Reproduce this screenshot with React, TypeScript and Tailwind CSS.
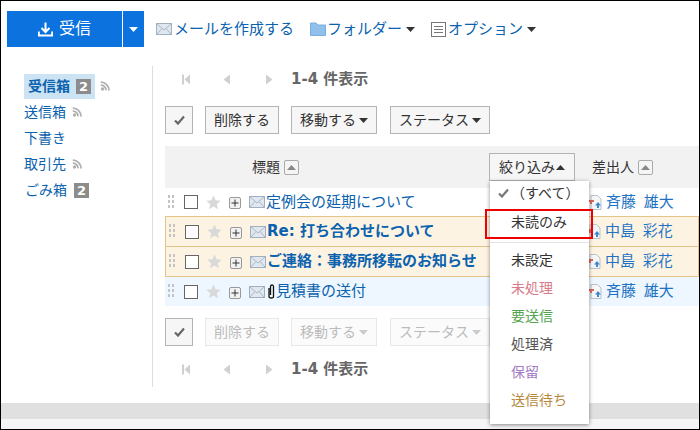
import { Fragment } from "react";

const FONT = "font-['DejaVu_Sans','Noto_Sans_CJK_JP',sans-serif]";

function Caret({ color = "#333", up = false, className = "" }: { color?: string; up?: boolean; className?: string }) {
  return (
    <svg width="9" height="5" viewBox="0 0 9 5" className={className}>
      <path d={up ? "M0 5L4.5 0L9 5Z" : "M0 0H9L4.5 5Z"} fill={color} />
    </svg>
  );
}

function Mail({ className = "" }: { className?: string }) {
  return (
    <svg width="16" height="12" viewBox="0 0 16 12" className={"shrink-0 " + className}>
      <rect x="0.5" y="0.5" width="15" height="11" fill="#e1e7ee" stroke="#9fb0c0" />
      <path d="M1 1L8 7L15 1M1 11L6 5.5M15 11L10 5.5" fill="none" stroke="#a9b8c6" />
    </svg>
  );
}

function Rss({ className = "" }: { className?: string }) {
  return (
    <svg width="10" height="10" viewBox="0 0 10 10" className={className}>
      <circle cx="2.5" cy="8" r="1.7" fill="#b0b0b0" />
      <path d="M0.8 4.2A5 5 0 0 1 6 9.4M0.8 1.2A8 8 0 0 1 9 9.4" fill="none" stroke="#b0b0b0" strokeWidth="1.8" />
    </svg>
  );
}

function Badge({ className = "" }: { className?: string }) {
  return (
    <span className={"flex h-[15px] w-[15px] items-center justify-center bg-[#8c8c8c] text-[13px] leading-none font-bold text-white " + className}>2</span>
  );
}

function SortBtn() {
  return (
    <span className="flex h-[15px] w-[15px] items-center justify-center rounded-[2px] border border-[#aaa] bg-[#f5f5f5]">
      <Caret color="#888" up />
    </span>
  );
}

function Btn({ label, caret, off }: { label: string; caret?: boolean; off?: boolean }) {
  return (
    <span
      className={
        "flex h-[28px] items-center justify-center border bg-[#f6f6f6] px-[8px] text-[14px] " +
        (off ? "border-[#e8e8e8] bg-[#fbfbfb] text-[#bbb]" : "border-[#b4b4b4] text-[#333]")
      }
    >
      {label}
      {caret && <Caret color={off ? "#ccc" : "#333"} className="ml-[3px]" />}
    </span>
  );
}

function CheckBtn() {
  return (
    <span className="flex h-[28px] w-[28px] items-center justify-center border border-[#b4b4b4] bg-[#f6f6f6]">
      <svg width="11" height="10" viewBox="0 0 11 10">
        <path d="M1 5.5L4 8.5L10 1.5" fill="none" stroke="#666" strokeWidth="2.2" />
      </svg>
    </span>
  );
}

function Pager({ className = "" }: { className?: string }) {
  return (
    <div className={"flex items-center pl-[17px] " + className}>
      <svg width="9" height="11" viewBox="0 0 9 11" fill="#d0d0d0">
        <rect x="0" y="0.5" width="2" height="10" />
        <path d="M8 0.5V10.5L2.5 5.5Z" />
      </svg>
      <svg width="7" height="11" viewBox="0 0 7 11" fill="#d0d0d0" className="ml-[32px]">
        <path d="M7 0.5V10.5L0.5 5.5Z" />
      </svg>
      <svg width="7" height="11" viewBox="0 0 7 11" fill="#d0d0d0" className="ml-[36px]">
        <path d="M0 0.5V10.5L6.5 5.5Z" />
      </svg>
      <span className="ml-[18px] text-[15px] font-bold text-[#666]">1-4 件表示</span>
    </div>
  );
}

function Toolbar({ off }: { off?: boolean }) {
  return (
    <div className="flex items-center">
      <CheckBtn />
      <span className="ml-[12px]"><Btn label="削除する" off={off} /></span>
      <span className="ml-[12px]"><Btn label="移動する" caret off={off} /></span>
      <span className="ml-[13px]"><Btn label="ステータス" caret off={off} /></span>
    </div>
  );
}

const rows = [
  { title: "定例会の延期について", name: "斉藤 雄大", bold: false, clip: false, cls: "h-[28px]" },
  { title: "Re: 打ち合わせについて", name: "中島 彩花", bold: true, clip: false, cls: "h-[31px] border border-[#e5c487] bg-[#fdf3e3]" },
  { title: "ご連絡：事務所移転のお知らせ", name: "中島 彩花", bold: true, clip: false, cls: "h-[30px] border border-t-0 border-[#e5c487] bg-[#fdf3e3]" },
  { title: "見積書の送付", name: "斉藤 雄大", bold: false, clip: true, cls: "h-[29px] bg-[#eef7ff]" },
];

function Row({ r }: { r: (typeof rows)[number] }) {
  return (
    <div className={"flex items-center pl-[3px] " + r.cls}>
      <svg width="6" height="15" viewBox="0 0 6 15" fill="#c4c4c4" className="shrink-0">
        {[0, 5, 10].map((y) => (
          <Fragment key={y}>
            <rect x="0" y={y} width="2" height="3" />
            <rect x="4" y={y} width="2" height="3" />
          </Fragment>
        ))}
      </svg>
      <span className="ml-[10px] h-[14px] w-[14px] shrink-0 border border-[#666] bg-white" />
      <svg width="15" height="15" viewBox="0 0 15 15" className="ml-[8px] shrink-0">
        <path d="M7.5 0.5L9.6 5.3L14.7 5.8L10.8 9.2L12 14.3L7.5 11.6L3 14.3L4.2 9.2L0.3 5.8L5.4 5.3Z" fill="#d9d9d9" />
      </svg>
      <span className="mt-[2px] ml-[8px] flex h-[12px] w-[12px] shrink-0 items-center justify-center rounded-[2px] border border-[#999] bg-[#f2f2f2] text-[#333]">
        <svg width="8" height="8" viewBox="0 0 8 8">
          <path d="M4 0.5V7.5M0.5 4H7.5" stroke="#333" />
        </svg>
      </span>
      <Mail className="ml-[8px]" />
      {r.clip && (
        <svg width="7" height="15" viewBox="0 0 7 15" className="ml-[3px] shrink-0">
          <path d="M1 4V12.5C1 14.5 5.5 14.5 5.5 12.5V2.5C5.5 0.5 2.5 0.5 2.5 2.5V11" fill="none" stroke="#111" strokeWidth="1.3" />
        </svg>
      )}
      <span className={"ml-[1px] flex-1 whitespace-nowrap text-[15px] text-[#0b62ae] " + (r.bold ? "font-bold" : "")}>{r.title}</span>
      <span className="flex w-[111px] shrink-0 items-center">
        <svg width="14" height="15" viewBox="0 0 14 15" className="shrink-0">
          <path d="M3 0.5H9.5L13 4V14.5H3Z" fill="#f4f6f8" stroke="#b9c2ca" />
          <path d="M0 6H6M3 5V9" stroke="#e0685a" strokeWidth="2" />
          <path d="M10 7L13 10.5H11V13H9V10.5H7Z" fill="#3d88cc" />
        </svg>
        <span className="ml-[4px] whitespace-nowrap text-[15px] [word-spacing:3px] text-[#1f73c4]">{r.name}</span>
      </span>
    </div>
  );
}

const menu = [
  { label: "未設定", cls: "text-[#333]" },
  { label: "未処理", cls: "text-[#d97a8a]" },
  { label: "要送信", cls: "text-[#55a34f]" },
  { label: "処理済", cls: "text-[#555]" },
  { label: "保留", cls: "text-[#a27cc4]" },
  { label: "送信待ち", cls: "text-[#b98a3e]" },
];

function Menu() {
  return (
    <div className="absolute top-[27px] left-0 z-10 w-[99px] bg-white text-[14px] shadow-[0_1px_4px_rgba(0,0,0,0.45)]">
      <div className="flex h-[27px] items-center pb-[3px] pl-[8px] text-[#333]">
        <svg width="11" height="10" viewBox="0 0 11 10">
          <path d="M1 5.5L4 8.5L10 1.5" fill="none" stroke="#777" strokeWidth="2.2" />
        </svg>
        <span className="ml-[2px]">（すべて）</span>
      </div>
      <div className="relative flex h-[28px] items-center pl-[21px] text-[#333]">
        未読のみ
        <span className="absolute top-[1px] -left-[5px] h-[30px] w-[108px] border-2 border-[#ee0000]" />
      </div>
      <div className="mt-[6px] mb-[3px] h-px bg-[#e4e4e4]" />
      {menu.map((m) => (
        <div key={m.label} className={"flex h-[28px] items-center pl-[21px] " + m.cls}>{m.label}</div>
      ))}
      <div className="h-[10px]" />
    </div>
  );
}

export default function App() {
  return (
    <div className={"flex h-[430px] w-[700px] flex-col overflow-hidden border border-black bg-white " + FONT}>
      <div className="flex h-[65px] shrink-0 items-start pt-[10px] pl-[6px]">
        <div className="flex h-[36px] w-[137px] items-center bg-[#0b72de]">
          <div className="flex h-full w-[115px] items-center justify-center text-[16px] text-white">
            <svg width="15" height="15" viewBox="0 0 15 15" className="mr-[6px]">
              <path d="M7.5 0.5V9M3.5 6L7.5 10L11.5 6M0.8 9.5V13.5H14.2V9.5" fill="none" stroke="#fff" strokeWidth="2" />
            </svg>
            受信
          </div>
          <span className="h-full w-px bg-white" />
          <div className="flex flex-1 items-center justify-center">
            <Caret color="#fff" />
          </div>
        </div>
        <div className="ml-[12px] flex h-[36px] items-center text-[15px] text-[#0b62ae]">
          <Mail />
          <span className="ml-[2px]">メールを作成する</span>
          <svg width="16" height="14" viewBox="0 0 16 14" className="ml-[16px]">
            <path d="M0.5 1H6L8 3H15.5V13.5H0.5Z" fill="#8fc1ec" stroke="#79aedd" />
          </svg>
          <span className="ml-[1px]">フォルダー</span>
          <Caret className="ml-[4px]" />
          <svg width="15" height="15" viewBox="0 0 15 15" className="ml-[16px]">
            <rect x="0.5" y="0.5" width="14" height="14" fill="#fff" stroke="#777" />
            <path d="M3 4.5H12M3 7.5H12M3 10.5H12" stroke="#777" />
          </svg>
          <span className="ml-[2px]">オプション</span>
          <Caret className="ml-[4px]" />
        </div>
      </div>

      <div className="flex h-[321px] shrink-0">
        <div className="h-full w-[152px] shrink-0 border-r border-[#ddd] pt-[7px] text-[14px] text-[#0b62ae]">
          <div className="ml-[23px] flex h-[26px] items-center">
            <span className="flex h-[25px] items-center bg-[#cbe3f3] pr-[4px] pl-[4px] font-bold">
              受信箱<Badge className="ml-[6px]" />
            </span>
            <Rss className="ml-[5px]" />
          </div>
          <div className="ml-[23px] flex h-[26px] items-center">送信箱<Rss className="ml-[6px]" /></div>
          <div className="ml-[23px] flex h-[26px] items-center">下書き</div>
          <div className="ml-[23px] flex h-[26px] items-center">取引先<Rss className="ml-[6px]" /></div>
          <div className="ml-[24px] flex h-[26px] items-center">ごみ箱<Badge className="ml-[7px]" /></div>
        </div>

        <div className="flex-1 pl-[12px]">
          <Pager className="h-[27px]" />
          <div className="mt-[13px]"><Toolbar /></div>
          <div className="mt-[12px] flex h-[42px] items-center bg-[#f2f2f2] text-[14px] text-[#333]">
            <span className="ml-[87px]">標題</span>
            <span className="ml-[4px]"><SortBtn /></span>
            <div className="relative ml-[190px] flex h-[28px] w-[86px] items-center justify-center border border-[#b4b4b4] bg-[#f6f6f6]">
              絞り込み<Caret up className="ml-[1px]" />
              <Menu />
            </div>
            <span className="ml-[17px]">差出人</span>
            <span className="ml-[4px]"><SortBtn /></span>
          </div>
          {rows.map((r) => (
            <Row key={r.title} r={r} />
          ))}
          <div className="mt-[12px]"><Toolbar off /></div>
          <Pager className="mt-[10px] h-[27px]" />
        </div>
      </div>

      <div className="mt-[16px] h-[16px] shrink-0 bg-[#e0e0e0]" />
      <div className="flex-1 bg-[#f5f5f5]" />
    </div>
  );
}
